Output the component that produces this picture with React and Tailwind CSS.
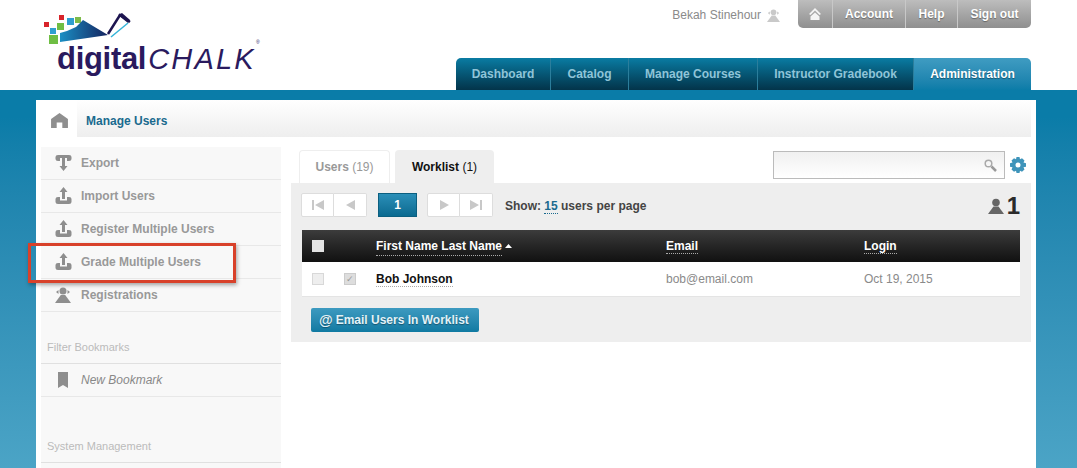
function Logo() {
  return (
    <div className="relative w-[230px] h-[90px]">
      <svg className="absolute left-0 top-0" width="100" height="50" viewBox="0 0 100 50">
        <defs>
          <linearGradient id="wedge" x1="0" y1="0" x2="1" y2="0">
            <stop offset="0%" stopColor="#1b8fc4" />
            <stop offset="100%" stopColor="#14235f" />
          </linearGradient>
        </defs>
        <rect x="1" y="22" width="5" height="5" fill="#d8232a" />
        <rect x="16" y="15" width="5" height="5" fill="#d8232a" />
        <rect x="14" y="23" width="7" height="7" fill="#6fbe44" />
        <rect x="7" y="28" width="6" height="6" fill="#2f9fd0" />
        <rect x="6" y="35" width="9" height="9" fill="#6fbe44" />
        <rect x="24" y="18" width="7" height="7" fill="#2f9fd0" />
        <rect x="32" y="17" width="6" height="6" fill="#7dbb4a" />
        <path d="M17 33 L24 31 L33 27 L40 20 L65 35 L17 42 Z" fill="url(#wedge)" />
      </svg>
      <svg className="absolute left-[57px] top-[8px]" width="40" height="34" viewBox="0 0 40 34">
        <path d="M8 26 L20 7 L30 14" fill="none" stroke="#1d1550" strokeWidth="2.5" />
        <path d="M18 7 L22 5 L30 12 L28 15 Z" fill="#1d1550" />
        <path d="M11 29 L28 15" stroke="#35b4d8" strokeWidth="1.5" />
      </svg>
      <div className="absolute left-[14px] top-[39px] flex items-baseline leading-[40px]">
        <span className="font-['Liberation_Sans',sans-serif] font-bold text-[31px] tracking-[-0.3px] text-[#2a1a5e]">digital</span>
        <span className="ml-[2px] font-['Liberation_Sans',sans-serif] italic text-[29px] tracking-[2.2px] text-[#2a1a5e] font-light">CHALK</span>
      </div>
      <span className="absolute left-[213px] top-[40px] text-[5px] leading-none text-[#2a1a5e]">®</span>
    </div>
  );
}

function HomeIcon({ className }) {
  return (
    <svg className={className} viewBox="0 0 18 16">
      <path d="M9 0 L18 6.5 V16 H12 V10 H6 V16 H0 V6.5 Z" fill="#8f8f8f" />
    </svg>
  );
}

function UploadIcon() {
  return (
    <svg width="17" height="18" viewBox="0 0 17 18">
      <path d="M8.5 0 L12.5 5 H10 V12 H7 V5 H4.500 Z" fill="#8e8e8e" />
      <path d="M0.500 12 Q0.500 10 3 10 H5 V13.500 H12 V10 H14 Q16.500 10 16.500 12 V15 Q16.500 17 14 17 H3 Q0.500 17 0.500 15 Z" fill="#8e8e8e" />
    </svg>
  );
}

function ExportIcon() {
  return (
    <svg width="17" height="18" viewBox="0 0 17 18">
      <path d="M0.500 3 Q0.500 1 3 1 H14 Q16.500 1 16.500 3 V5 Q16.500 7 14 7 H12 V4 H5 V7 H3 Q0.500 7 0.500 5 Z" fill="#8e8e8e" />
      <path d="M7 4 H10 V12 H12.500 L8.500 17 L4.500 12 H7 Z" fill="#8e8e8e" />
    </svg>
  );
}

function PersonIcon({ className, fill = "#8e8e8e" }) {
  return (
    <svg className={className} viewBox="0 0 16 16" fill={fill}>
      <circle cx="8" cy="4.500" r="3.800" />
      <path d="M5.500 8.500 H10.500 L16 16 H0 Z" />
    </svg>
  );
}

// person with the small side arrows, used on Registrations and next to the user name
function RegistrationsIcon({ className, fill = "#8e8e8e" }) {
  return (
    <svg className={className} viewBox="0 0 16 16" fill={fill}>
      <circle cx="8" cy="4" r="3.500" />
      <path d="M5.800 8 H10.200 L16 16 H0 Z" />
      <path d="M3.500 3 V7 L1 5 Z M12.500 3 V7 L15 5 Z" />
    </svg>
  );
}

function SideRow({ icon, label, marked }) {
  return (
    <div className="relative h-[33px] flex items-center border-b border-[#e8e8e8]">
      <span className="w-[40px] flex justify-center pl-[4px]">{icon}</span>
      <span className="text-[12px] font-bold text-[#999999]">{label}</span>
      {marked && (
        <div className="absolute left-[-13px] top-[-3px] w-[208px] h-[40px] border-[3px] border-[#d8412a] shadow-[1px_2px_4px_rgba(0,0,0,0.35)]" />
      )}
    </div>
  );
}

function PagerBtn({ d, first }) {
  return (
    <span className={`w-[33px] h-[24px] flex items-center justify-center bg-white border border-[#dddddd] ${first ? "rounded-l-[2px]" : "border-l-0 rounded-r-[2px]"}`}>
      <svg width="12" height="10" viewBox="0 0 12 10"><path d={d} fill="#c8c8c8" /></svg>
    </span>
  );
}

const tabs = [
  ["Dashboard", "w-[95px]"],
  ["Catalog", "w-[78px]"],
  ["Manage Courses", "w-[129px]"],
  ["Instructor Gradebook", "w-[156px]"],
];

export default function App() {
  return (
    <div className="w-[1077px] h-[468px] overflow-hidden font-['Liberation_Sans',sans-serif] bg-gradient-to-b from-[#0a7ca8] via-[#0a7ca8] via-[25%] to-[#4ba4c6]">
      <header className="h-[90px] bg-white flex justify-between pl-[43px] pr-[46px]">
        <Logo />
        <div className="flex flex-col items-end">
          <div className="flex items-start h-[58px]">
            <span className="flex items-center h-[30px] text-[12px] text-[#8a8a8a] mr-[18px]">
              Bekah Stinehour
              <RegistrationsIcon className="w-[13px] h-[13px] ml-[6px]" fill="#c9c9c9" />
            </span>
            <nav className="flex h-[28px] w-[233px] rounded-b-[5px] overflow-hidden bg-gradient-to-b from-[#bdbdbd] to-[#8f8f8f] text-[12px] font-bold text-white [text-shadow:0_1px_1px_rgba(0,0,0,0.35)]">
              <span className="w-[35px] flex items-center justify-center border-r border-[#c8c8c8]">
                <svg width="12" height="12" viewBox="0 0 12 12"><path d="M6 0 L12 6 L10.500 7 L6 2.500 L1.500 7 L0 6 Z M6 4.500 L10.500 8.500 V12 H1.500 V8.500 Z" fill="#f4f4f4" /></svg>
              </span>
              <span className="w-[73px] flex items-center justify-center border-r border-[#c8c8c8]">Account</span>
              <span className="w-[52px] flex items-center justify-center border-r border-[#c8c8c8]">Help</span>
              <span className="flex-1 flex items-center justify-center">Sign out</span>
            </nav>
          </div>
          <nav className="flex h-[32px] w-[575px] rounded-t-[5px] overflow-hidden text-[12px] font-bold">
            {tabs.map(([name, w]) => (
              <span key={name} className={`${w} flex items-center justify-center border-r border-[#2b7e9c] bg-gradient-to-b from-[#0a7ca3] to-[#03344a] text-[#8fc4d8]`}>
                {name}
              </span>
            ))}
            <span className="flex-1 flex items-center justify-center bg-gradient-to-b from-[#3f9cc2] to-[#0a7ca8] text-white [text-shadow:0_1px_1px_rgba(0,0,0,0.4)]">
              Administration
            </span>
          </nav>
        </div>
      </header>

      <main className="w-[1000px] ml-[36px] mt-[10px] h-[368px] bg-white pr-[5px]">
        <div className="flex h-[37px]">
          <span className="w-[41px] flex items-center justify-center pl-[5px] pt-[3px]">
            <HomeIcon className="w-[17px] h-[15px]" />
          </span>
          <div className="flex-1 flex items-center pl-[9px] pt-[4px] bg-gradient-to-b from-white to-[#eeeeee] text-[12px] font-bold text-[#1a6a8e]">
            Manage Users
          </div>
        </div>

        <div className="flex mt-[10px] pl-[5px]">
          <aside className="w-[240px] h-[321px] bg-[#f8f8f8]">
            <SideRow icon={<ExportIcon />} label="Export" />
            <SideRow icon={<UploadIcon />} label="Import Users" />
            <SideRow icon={<UploadIcon />} label="Register Multiple Users" />
            <SideRow icon={<UploadIcon />} label="Grade Multiple Users" marked />
            <SideRow icon={<RegistrationsIcon className="w-[16px] h-[16px]" />} label="Registrations" />
            <div className="h-[52px] flex items-end pb-[8px] pl-[6px] border-b border-[#e0e0e0] text-[11px] text-[#bbbbbb]">Filter Bookmarks</div>
            <div className="h-[33px] flex items-center border-b border-[#e8e8e8]">
              <span className="w-[40px] flex justify-center pl-[4px]">
                <svg width="10" height="16" viewBox="0 0 10 16"><path d="M0 0 H10 V16 L5 13 L0 16 Z" fill="#8e8e8e" /></svg>
              </span>
              <span className="text-[12px] italic text-[#888888]">New Bookmark</span>
            </div>
            <div className="h-[66px] flex items-end pb-[8px] pl-[6px] border-b border-[#e0e0e0] text-[11px] text-[#bbbbbb]">System Management</div>
          </aside>

          <section className="w-[740px] ml-[10px] pt-[3px]">
            <div className="flex h-[33px] items-start text-[12px] font-bold">
              <span className="ml-[8px] w-[91px] h-[33px] flex items-center justify-center rounded-t-[4px] border border-b-0 border-[#eeeeee] text-[#999999]">
                Users&nbsp;<span className="font-normal">(19)</span>
              </span>
              <span className="ml-[5px] w-[99px] h-[33px] flex items-center justify-center rounded-t-[4px] bg-[#eeeeee] text-[#111111]">
                Worklist&nbsp;<span className="font-normal">(1)</span>
              </span>
              <div className="ml-auto flex items-center mr-[5px] mt-[1px]">
                <div className="w-[232px] h-[28px] flex items-center justify-end pr-[7px] border border-[#bbbbbb] bg-gradient-to-b from-[#f0f0f0] to-white">
                  <svg width="13" height="13" viewBox="0 0 13 13">
                    <circle cx="4.500" cy="4.500" r="3.300" fill="none" stroke="#aaaaaa" strokeWidth="1.500" />
                    <path d="M7.500 7.500 L12 12" stroke="#999999" strokeWidth="2.500" />
                  </svg>
                </div>
                <svg className="ml-[5px]" width="16" height="16" viewBox="0 0 16 16">
                  <path d="M6.500 0 H9.500 L10 2.200 L12 1.200 L14.500 3.500 L13.500 5.600 L16 6.300 V9.700 L13.500 10.300 L14.500 12.500 L12 14.800 L10 13.800 L9.500 16 H6.500 L6 13.800 L4 14.800 L1.500 12.500 L2.500 10.300 L0 9.700 V6.300 L2.500 5.600 L1.500 3.500 L4 1.200 L6 2.200 Z M8 5.500 A2.500 2.500 0 1 0 8 10.500 A2.500 2.500 0 1 0 8 5.500 Z" fill="#3f94ba" fillRule="evenodd" />
                </svg>
              </div>
            </div>

            <div className="h-[159px] bg-[#eeeeee] pt-[10px] pl-[10px] pr-[11px]">
              <div className="flex items-center h-[24px]">
                <PagerBtn first d="M0 0 H2 V10 H0 Z M12 0 V10 L3 5 Z" />
                <PagerBtn d="M11 0 V10 L2 5 Z" />
                <span className="ml-[11px] w-[39px] h-[24px] flex items-center justify-center bg-gradient-to-b from-[#2a8fb8] to-[#0a6a90] border border-[#0b5f80] text-white text-[12px] font-bold">1</span>
                <span className="ml-[10px] flex">
                  <PagerBtn first d="M2 0 V10 L11 5 Z" />
                  <PagerBtn d="M0 0 V10 L9 5 Z M10 0 H12 V10 H10 Z" />
                </span>
                <span className="ml-[12px] pt-[2px] text-[12px] font-bold text-[#444444]">
                  Show: <span className="text-[#1a6a8e] border-b border-dotted border-[#1a6a8e]">15</span> users per page
                </span>
                <span className="ml-auto flex items-center text-[24px] font-bold text-[#2a2a2a] pt-[2px]">
                  <PersonIcon className="w-[16px] h-[16px] mr-[3px]" fill="#666666" />1
                </span>
              </div>

              <div className="mt-[13px] ml-[1px] h-[32px] flex items-center bg-gradient-to-b from-[#3c3c3c] to-[#111111] text-[12px] font-bold text-white">
                <span className="ml-[10px] w-[12px] h-[12px] bg-[#e4e4e4]" />
                <span className="ml-[52px] w-[290px] flex items-center">
                  <span className="border-b border-dotted border-[#aaaaaa]">First Name Last Name</span>
                  <svg className="ml-[3px]" width="7" height="4" viewBox="0 0 7 4"><path d="M0 4 L3.500 0 L7 4 Z" fill="#ffffff" /></svg>
                </span>
                <span className="w-[198px]"><span className="border-b border-dotted border-[#aaaaaa]">Email</span></span>
                <span><span className="border-b border-dotted border-[#aaaaaa]">Login</span></span>
              </div>
              <div className="ml-[1px] h-[35px] flex items-center bg-white border-b border-[#e4e4e4] text-[12px] text-[#8a8a8a]">
                <span className="ml-[10px] w-[12px] h-[12px] border border-[#d8d8d8] bg-[#eeeeee]" />
                <span className="ml-[20px] w-[12px] h-[12px] flex items-center justify-center border border-[#cccccc] bg-[#dddddd] text-[9px] text-[#999999] leading-none">✓</span>
                <span className="ml-[20px] w-[290px] text-[#111111] font-bold"><span className="border-b border-dotted border-[#aaaaaa]">Bob Johnson</span></span>
                <span className="w-[198px]">bob@email.com</span>
                <span>Oct 19, 2015</span>
              </div>

              <button className="mt-[11px] ml-[10px] w-[168px] h-[24px] flex items-center pl-[8px] rounded-[2px] bg-gradient-to-b from-[#3c9ac0] to-[#0f7aa2] text-[12px] font-bold text-[#e2f2f8] [text-shadow:0_1px_1px_rgba(0,0,0,0.35)]">
                <span className="text-[14px] mr-[3px]">@</span>Email Users In Worklist
              </button>
            </div>
          </section>
        </div>
      </main>
    </div>
  );
}
